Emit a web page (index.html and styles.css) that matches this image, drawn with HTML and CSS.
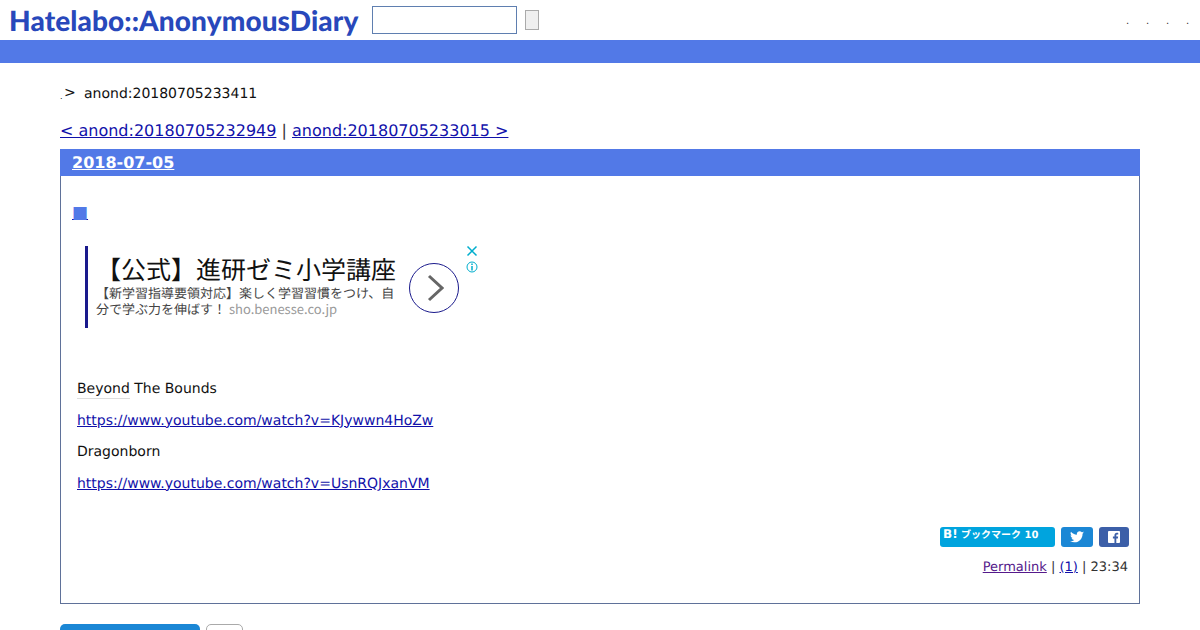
FILE: index.html
```html
<!DOCTYPE html>
<html lang="ja">

<head>
    <meta charset="UTF-8">
    <title>anond:20180705233411</title>
    <link rel="stylesheet" href="styles.css">
</head>

<body>
    <div class="header">
        <a class="logo" href="#">Hatelabo::AnonymousDiary</a>
        <input class="search" type="text">
        <button class="search-btn" type="button"></button>
        <div class="header-links">
            <span>.</span><span>.</span><span>.</span><span>.</span>
        </div>
    </div>
    <div class="bar"></div>

    <div class="container">
        <p class="crumb"><span class="dot">.</span><span class="gt">&gt;</span><span>anond:20180705233411</span></p>
        <p class="prevnext"><a href="#">&lt; anond:20180705232949</a> | <a href="#">anond:20180705233015 &gt;</a></p>

        <div class="day">
            <h2 class="day-title"><a href="#">2018-07-05</a></h2>
            <div class="day-body">
                <h3 class="entry-mark"><a href="#">■</a></h3>

                <div class="ad">
                    <div class="ad-main">
                        <div class="ad-title">【公式】進研ゼミ小学講座</div>
                        <div class="ad-text">【新学習指導要領対応】楽しく学習習慣をつけ、自分で学ぶ力を伸ばす！ <span class="ad-domain">sho.benesse.co.jp</span></div>
                    </div>
                    <div class="ad-arrow">
                        <svg width="18" height="28" viewBox="0 0 18 28"><path d="M3 2 L16 14 L3 26" fill="none" stroke="#666" stroke-width="3"/></svg>
                    </div>
                    <div class="ad-icons">
                        <svg width="12" height="12" viewBox="0 0 12 12"><path d="M1.500 1.500 L10.500 10.500 M10.500 1.500 L1.500 10.500" stroke="#00aecd" stroke-width="1.500"/></svg>
                        <svg width="12" height="12" viewBox="0 0 12 12"><circle cx="6" cy="6" r="5" fill="none" stroke="#00aecd"/><path d="M6 5 V9.500 M6 2.500 V4" stroke="#00aecd" stroke-width="1.500"/></svg>
                    </div>
                </div>

                <div class="entry">
                    <p><span class="keyword">Beyond</span> The Bounds</p>
                    <p><a href="#">https://www.youtube.com/watch?v=KJywwn4HoZw</a></p>
                    <p>Dragonborn</p>
                    <p><a href="#">https://www.youtube.com/watch?v=UsnRQJxanVM</a></p>
                </div>

                <div class="share">
                    <a class="share-hatena" href="#"><span class="hatena-b">B!</span> ブックマーク 10</a>
                    <a class="share-btn share-twitter" href="#">
                        <svg width="14" height="12" viewBox="0 0 24 20"><path fill="#fff" d="M24 2.400c-.9.400-1.800.700-2.800.800 1-.600 1.800-1.600 2.200-2.700-1 .600-2 1-3.100 1.200C19.300.700 18 0 16.600 0c-2.700 0-4.900 2.200-4.900 4.900 0 .400 0 .800.100 1.100C7.700 5.800 4.100 3.900 1.700.900c-.400.700-.700 1.600-.700 2.500 0 1.700.900 3.200 2.200 4.100-.800 0-1.600-.200-2.200-.600v.100c0 2.400 1.700 4.400 3.900 4.800-.400.100-.800.200-1.300.200-.300 0-.600 0-.900-.100.600 2 2.400 3.400 4.600 3.400-1.700 1.300-3.800 2.100-6.100 2.100-.400 0-.800 0-1.200-.100C2.200 18.300 4.800 19.100 7.500 19.100c9.100 0 14-7.500 14-14v-.600c1-.700 1.800-1.600 2.500-2.100z"/></svg>
                    </a>
                    <a class="share-btn share-facebook" href="#">
                        <svg width="12" height="12" viewBox="0 0 13 13"><path fill="#fff" d="M1 0h11a1 1 0 0 1 1 1v11a1 1 0 0 1-1 1H9V8h1.700l.300-2H9V4.800c0-.600.200-1 1-1h1.100V2.100C10.800 2 10.200 2 9.600 2 8 2 7 3 7 4.600V6H5.300v2H7v5H1a1 1 0 0 1-1-1V1a1 1 0 0 1 1-1z"/></svg>
                    </a>
                </div>
                <p class="sectionfooter"><a class="visited" href="#">Permalink</a> | <a href="#">(1)</a> | 23:34</p>
            </div>
        </div>

        <div class="after-buttons">
            <a class="write-btn" href="#"></a>
            <a class="small-btn" href="#"></a>
        </div>
    </div>
</body>

</html>
```

FILE: styles.css
```css
html,
body {
    height: 630px;
    overflow: hidden;
}

body {
    font-family: 'DejaVu Sans', 'Noto Sans CJK JP', sans-serif;
    font-size: 14px;
    background: #fff;
    color: #111;
    margin: 0;
    padding: 0;
    text-rendering: geometricPrecision;
}

a {
    color: #1111aa;
}

.header {
    display: flex;
    align-items: center;
    height: 40px;
    padding-left: 9px;
}

.logo {
    font-family: 'Lato', sans-serif;
    font-weight: 900;
    font-size: 28px;
    letter-spacing: 0.1px;
    color: #2848bb;
    text-decoration: none;
    width: 363px;
    white-space: nowrap;
}

.search {
    width: 145px;
    height: 28px;
    box-sizing: border-box;
    border: 1px solid #5f7fb0;
    background: #fff;
    margin: 0 8px 0 0;
    padding: 0;
}

.search-btn {
    width: 14px;
    height: 20px;
    background: #efefef;
    border: 1px solid #aaa;
    padding: 0;
}

.header-links {
    margin-left: auto;
    display: flex;
    gap: 17px;
    padding: 3px 11px 0 0;
    font-size: 10px;
    color: #333;
}

.header-links span {
    width: 3px;
}

.bar {
    height: 23px;
    background: #5279e7;
}

.container {
    margin: 0 60px;
}

.crumb {
    display: flex;
    align-items: center;
    margin: 0;
    padding-top: 22px;
    height: 18px;
    line-height: 18px;
}

.crumb .dot {
    font-size: 8px;
    width: 4px;
    padding-top: 5px;
}

.crumb .gt {
    font-size: 14px;
    width: 20px;
    padding-bottom: 2px;
}

.prevnext {
    margin: 0;
    padding-top: 18px;
    font-size: 16px;
    line-height: 20px;
    color: #333;
}

.day {
    margin-top: 8px;
    border: 1px solid #5f7199;
    border-top: none;
    height: 454px;
}

.day-title {
    margin: 0 -1px;
    background: #5279e7;
    height: 27px;
    line-height: 27px;
    padding-left: 12px;
    font-size: 16px;
    font-weight: bold;
}

.day-title a {
    color: #fff;
}

.day-body {
    padding: 0 10px 0 11px;
}

.entry-mark {
    margin: 0;
    padding-top: 28px;
    height: 19px;
    line-height: 19px;
    font-size: 17px;
    font-weight: normal;
}

.entry-mark a {
    color: #5279e7;
    text-decoration-color: #1111aa;
}

.ad {
    display: flex;
    margin: 23px 0 0 13px;
    width: 394px;
    height: 82px;
    position: relative;
}

.ad-main {
    width: 299px;
    border-left: 3px solid #1a1a8c;
    padding-left: 8px;
    margin-right: 14px;
}

.ad-title {
    font-family: 'Noto Sans CJK JP', sans-serif;
    font-size: 25px;
    line-height: 30px;
    margin-top: 8px;
    white-space: nowrap;
    color: #111;
    text-align: right;
}

.ad-text {
    font-family: 'Noto Sans CJK JP', sans-serif;
    font-size: 13px;
    line-height: 16px;
    margin-top: 1px;
    color: #444;
}

.ad-domain {
    color: #999;
}

.ad-arrow {
    flex: none;
    width: 48px;
    height: 48px;
    margin-top: 17px;
    border: 1px solid #1a1a8c;
    border-radius: 50%;
    display: flex;
    align-items: center;
    justify-content: center;
}

.ad-arrow svg {
    margin-left: 2px;
}

.ad-icons {
    position: absolute;
    top: -1px;
    left: 381px;
    display: flex;
    flex-direction: column;
    gap: 4px;
}

.entry {
    margin: 53px 0 0 5px;
}

.entry p {
    margin: 0 0 14px;
    line-height: 17.500px;
}

.keyword {
    border-bottom: 1px solid #ddd;
    padding-bottom: 1px;
}

.share {
    display: flex;
    justify-content: flex-end;
    gap: 6px;
    margin-top: 34px;
}

.share a {
    height: 20px;
    border-radius: 3px;
    text-decoration: none;
}

.share-hatena {
    width: 115px;
    background: #00a4de;
    color: #fff;
    font-size: 10px;
    font-weight: bold;
    line-height: 15px;
    padding-left: 3px;
    box-sizing: border-box;
    white-space: nowrap;
}

.hatena-b {
    font-size: 12px;
}

.share-btn {
    width: 32px;
    display: flex;
    align-items: center;
    justify-content: center;
}

.share-twitter {
    background: #1b87d5;
}

.share-facebook {
    width: 30px;
    background: #3c5fa8;
}

.sectionfooter {
    margin: 12px 1px 0 0;
    text-align: right;
    font-size: 13px;
    line-height: 17px;
    color: #333;
}

.sectionfooter a.visited {
    color: #551a8b;
}

.after-buttons {
    display: flex;
    gap: 6px;
    margin-top: 20px;
}

.write-btn {
    width: 140px;
    height: 30px;
    background: #1b87d5;
    border-radius: 5px;
}

.small-btn {
    width: 35px;
    height: 30px;
    border: 1px solid #aaa;
    border-radius: 5px;
}
```
